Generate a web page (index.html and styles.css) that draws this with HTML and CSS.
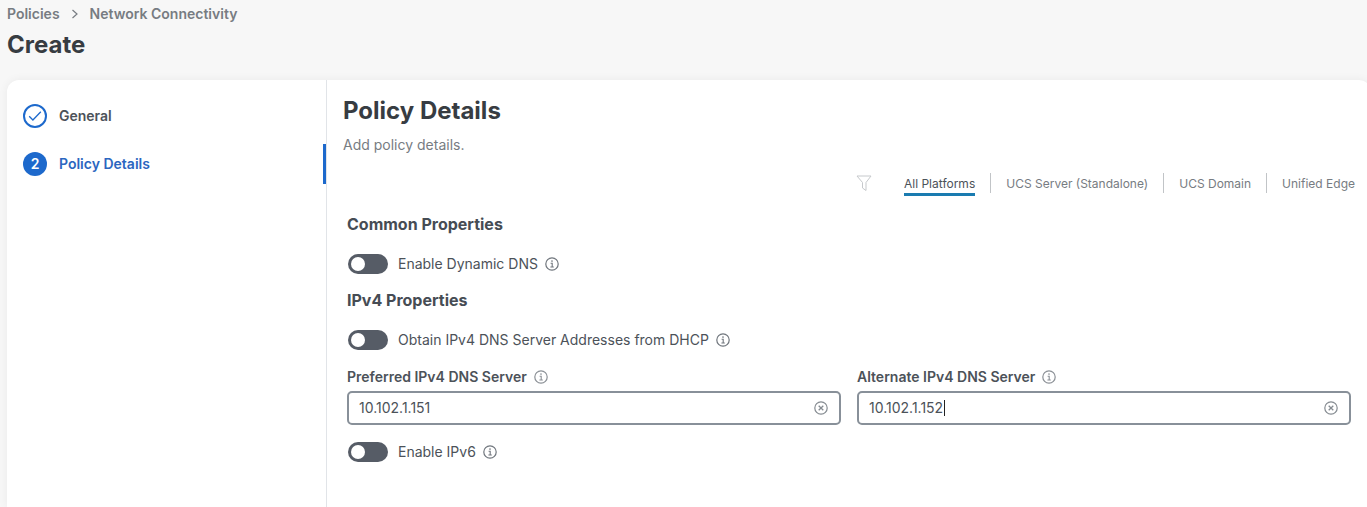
FILE: index.html
```html
<!DOCTYPE html>
<html lang="en">
<head>
<meta charset="utf-8">
<title>Create Network Connectivity Policy</title>
<link rel="stylesheet" href="styles.css">
</head>
<body>
<svg class="sprite" aria-hidden="true">
  <symbol id="info" viewBox="0 0 14 14">
    <circle cx="7" cy="7" r="6.2" fill="none" stroke="currentColor" stroke-width="1.2"/>
    <path d="M5.6 6.2H7.2V10M5.4 10H8.8" fill="none" stroke="currentColor" stroke-width="1.1"/>
    <circle cx="7" cy="4" r=".85" fill="currentColor"/>
  </symbol>
  <symbol id="clear" viewBox="0 0 14 14">
    <circle cx="7" cy="7" r="6.2" fill="none" stroke="currentColor" stroke-width="1.2"/>
    <path d="M4.7 4.7L9.3 9.3M9.3 4.7L4.7 9.3" fill="none" stroke="currentColor" stroke-width="1.3"/>
  </symbol>
</svg>
<header class="page-header">
  <nav class="breadcrumb" aria-label="Breadcrumb">
    <a href="#">Policies</a>
    <svg class="chevron" viewBox="0 0 8 10" aria-hidden="true"><path d="M1.5 1L6 5L1.5 9" fill="none" stroke="currentColor" stroke-width="1.2"/></svg>
    <a href="#">Network Connectivity</a>
  </nav>
  <h1 class="page-title">Create</h1>
</header>
<main class="card">
  <nav class="steps" aria-label="Steps">
    <a class="step" href="#">
      <span class="step-mark step-mark-done"><svg viewBox="0 0 14 12" aria-hidden="true"><path d="M1.2 6.2L4.9 10L12.8 1.8" fill="none" stroke="currentColor" stroke-width="1.3"/></svg></span>
      General
    </a>
    <a class="step step-active" href="#" aria-current="step">
      <span class="step-mark">2</span>
      Policy Details
    </a>
  </nav>
  <section class="content">
    <h2 class="content-title">Policy Details</h2>
    <p class="content-note">Add policy details.</p>
    <div class="platforms">
      <svg class="funnel" viewBox="0 0 16 17" aria-hidden="true"><path d="M1 1H15L10 7.5V15.5L6.5 13V7.5Z" fill="none" stroke="currentColor" stroke-width="1"/></svg>
      <button class="platform platform-active" type="button"><span>All Platforms</span></button>
      <button class="platform" type="button"><span>UCS Server (Standalone)</span></button>
      <button class="platform" type="button"><span>UCS Domain</span></button>
      <button class="platform" type="button"><span>Unified Edge</span></button>
    </div>
    <form class="form">
      <h3 class="group-title">Common Properties</h3>
      <div class="toggle-row">
        <input class="toggle" type="checkbox" role="switch" id="ddns">
        <label for="ddns">Enable Dynamic DNS</label>
        <svg class="icon"><use href="#info"/></svg>
      </div>
      <h3 class="group-title">IPv4 Properties</h3>
      <div class="toggle-row">
        <input class="toggle" type="checkbox" role="switch" id="dhcp">
        <label for="dhcp">Obtain IPv4 DNS Server Addresses from DHCP</label>
        <svg class="icon"><use href="#info"/></svg>
      </div>
      <div class="fields">
        <div class="field">
          <div class="field-head"><label for="dns1">Preferred IPv4 DNS Server</label><svg class="icon icon-light"><use href="#info"/></svg></div>
          <div class="control">
            <input class="control-input" type="text" id="dns1" value="10.102.1.151">
            <button class="clear" type="button" aria-label="Clear preferred server"><svg class="icon"><use href="#clear"/></svg></button>
          </div>
        </div>
        <div class="field">
          <div class="field-head"><label for="dns2">Alternate IPv4 DNS Server</label><svg class="icon icon-light"><use href="#info"/></svg></div>
          <div class="control">
            <input class="control-input" type="text" id="dns2" value="10.102.1.152">
            <span class="caret"></span>
            <button class="clear" type="button" aria-label="Clear alternate server"><svg class="icon"><use href="#clear"/></svg></button>
          </div>
        </div>
      </div>
      <div class="toggle-row">
        <input class="toggle" type="checkbox" role="switch" id="ipv6">
        <label for="ipv6">Enable IPv6</label>
        <svg class="icon"><use href="#info"/></svg>
      </div>
    </form>
  </section>
</main>
</body>
</html>
```
FILE: styles.css
```css
* { box-sizing: border-box; }
html { height: 100%; }
body {
  margin: 0;
  min-height: 100%;
  display: flex;
  flex-direction: column;
  overflow: hidden;
  background: #f7f7f7;
  color: #4c5259;
  font: 14px/20px Inter, "Liberation Sans", sans-serif;
}
h1, h2, h3, p { margin: 0; }
a { color: inherit; text-decoration: none; }
button { font: inherit; color: inherit; background: none; border: 0; padding: 0; }
.sprite { position: absolute; width: 0; height: 0; }

.page-header { padding: 4px 7px 19px; }
.breadcrumb { display: flex; align-items: center; gap: 11px; color: #777c82; font-weight: 600; }
.chevron { width: 8px; height: 10px; }
.page-title { margin-top: 5px; font-size: 24px; line-height: 32px; font-weight: 700; color: #373c42; }

.card {
  flex: 1;
  display: flex;
  margin: 0 -4px 0 7px;
  background: #fff;
  border-radius: 12px 12px 0 0;
  box-shadow: 0 0 10px rgba(0, 0, 0, 0.06);
}
.steps { width: 320px; padding-top: 16px; border-right: 1px solid #e1e4e8; display: flex; flex-direction: column; gap: 8px; }
.step { display: flex; align-items: center; gap: 12px; height: 40px; padding-left: 16px; font-weight: 600; }
.step-active { color: #2b66c0; border-right: 3px solid #1d69cc; }
.step-mark {
  display: flex;
  align-items: center;
  justify-content: center;
  width: 24px;
  height: 24px;
  border-radius: 50%;
  background: #1d69cc;
  color: #fff;
}
.step-mark-done { background: #fff; border: 2px solid #1d69cc; color: #1d69cc; }
.step-mark svg { width: 14px; height: 12px; }

.content { flex: 1; padding: 15px 16px 0; }
.content-title { font-size: 24px; line-height: 32px; font-weight: 700; color: #373c42; }
.content-note { margin-top: 8px; color: #777c82; }
.platforms { display: flex; align-items: center; justify-content: flex-end; margin-top: 18px; font-size: 12px; color: #777c82; }
.funnel { width: 16px; height: 17px; margin-right: 32px; color: #c6c9cc; }
.platform + .platform { margin-left: 15px; padding-left: 15px; border-left: 1px solid #c1c4c7; }
.platform span { display: block; height: 20px; line-height: 22px; }
.platform-active { color: #4c5259; }
.platform-active span { box-shadow: 0 3px #1a7bb0; }

.form { padding: 0 4px; }
.group-title { margin: 19px 0 8px; font-size: 16px; line-height: 24px; font-weight: 700; color: #464c54; }
.toggle-row { display: flex; align-items: center; height: 40px; padding-left: 1px; }
.toggle-row + .group-title { margin: 4px 0 8px; }
.toggle {
  appearance: none;
  width: 40px;
  height: 20px;
  margin: 0 10px 0 0;
  padding: 3px;
  border-radius: 10px;
  background: #565c66;
}
.toggle::before { content: ""; display: block; width: 14px; height: 14px; border-radius: 50%; background: #fff; }
.toggle:checked { background: #1d69cc; }
.toggle:checked::before { margin-left: auto; }
.icon { display: block; width: 14px; height: 14px; color: #70767d; }
.toggle-row .icon { margin-left: 7px; }
.fields { display: grid; grid-template-columns: 1fr 1fr; gap: 16px; margin: 7px 0; }
.field-head { display: flex; align-items: center; gap: 7px; margin-bottom: 4px; font-weight: 600; }
.icon-light { color: #8b9096; }
.control {
  position: relative;
  display: flex;
  align-items: center;
  height: 34px;
  padding: 0 11px 0 10px;
  border: 2px solid #889099;
  border-radius: 5px;
}
.control-input { flex: 1; min-width: 0; border: 0; padding: 0; outline: 0; background: none; font: inherit; color: inherit; }
.clear .icon { color: #858b91; }
.caret { position: absolute; left: 85px; top: 7px; width: 1px; height: 16px; background: #222; }
```
